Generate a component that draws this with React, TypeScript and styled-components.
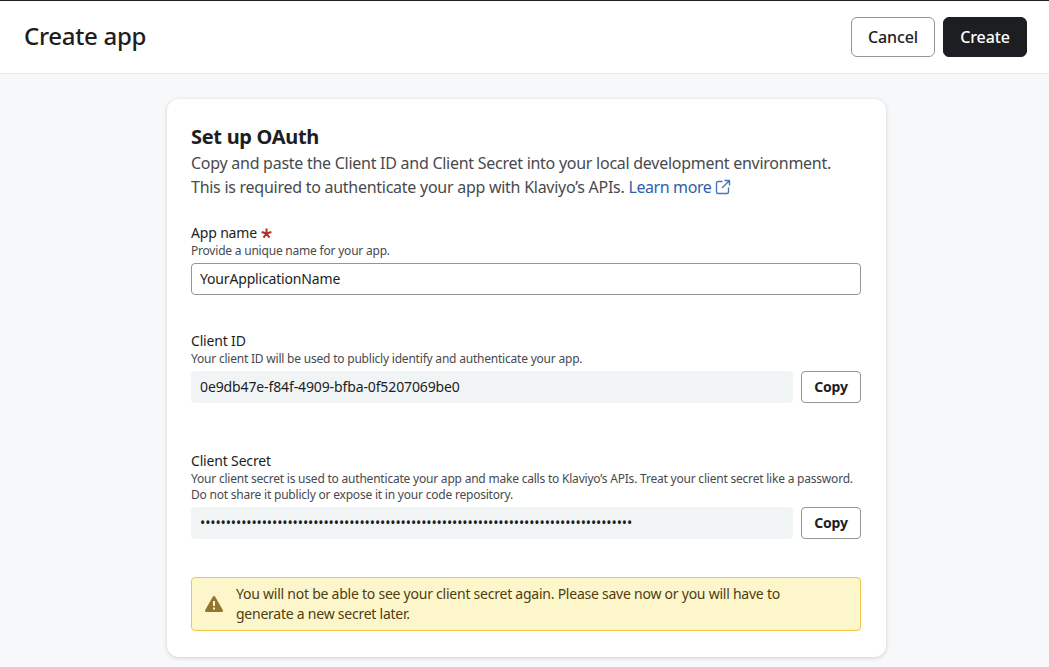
import React from 'react'
import styled, { createGlobalStyle } from 'styled-components'

const GlobalStyle = createGlobalStyle`
    html, body {
        margin: 0;
        padding: 0;
        background: #f7f8fa;
        font-family: "Noto Sans", "Open Sans", sans-serif;
        color: #1c1e21;
    }
`

const Page = styled.div`
    width: 1049px;
    height: 667px;
    overflow: hidden;
    background: #f7f8fa;
`

const Header = styled.header`
    height: 72px;
    box-sizing: content-box;
    background: #fff;
    border-top: 1px solid #1c1e21;
    border-bottom: 1px solid #e8eaec;
    display: flex;
    align-items: center;
    justify-content: space-between;
    padding: 0 22px 0 24px;
`

const Title = styled.h1`
    margin: 0 0 2px;
    font-size: 24px;
    line-height: 30px;
    font-weight: 500;
    letter-spacing: -0.3px;
`

const Actions = styled.div`
    display: flex;
    gap: 8px;
`

const Button = styled.button<{ $primary?: boolean }>`
    width: 84px;
    height: 40px;
    border-radius: 6px;
    box-sizing: border-box;
    font-family: inherit;
    font-size: 16px;
    font-weight: 500;
    letter-spacing: -0.15px;
    padding: 0;
    border: 1px solid ${p => (p.$primary ? '#1c1e21' : '#949596')};
    background: ${p => (p.$primary ? '#1c1e21' : '#fff')};
    color: ${p => (p.$primary ? '#fff' : '#1c1e21')};
`

const Main = styled.main`
    display: flex;
    justify-content: flex-start;
    padding: 25px 0 0 167px;
`

const Card = styled.section`
    width: 719px;
    height: 558px;
    box-sizing: border-box;
    background: #fff;
    border-radius: 12px;
    box-shadow: 0 1px 4px rgba(28, 30, 33, 0.18);
    padding: 26px 25px 0 24px;
`

const CardTitle = styled.h2`
    margin: 0;
    font-size: 20px;
    line-height: 24px;
    font-weight: 700;
    letter-spacing: -0.3px;
`

const Description = styled.p`
    margin: 2px 0 0;
    font-size: 16px;
    line-height: 24px;
    color: #484a4d;
    letter-spacing: -0.265px;
`

const LearnMore = styled.a`
    color: #2e5fa8;
    display: inline-flex;
    align-items: center;
    gap: 4px;
    letter-spacing: -0.4px;
    svg {
        display: block;
    }
`

const Field = styled.div<{ $top: number }>`
    margin-top: ${p => p.$top}px;
`

const Label = styled.div`
    display: flex;
    align-items: center;
    gap: 4px;
    font-size: 14px;
    line-height: 20px;
    color: #1c1e21;
    letter-spacing: -0.17px;
`

const Help = styled.div`
    font-size: 12px;
    line-height: 16px;
    color: #484a4d;
    letter-spacing: -0.21px;
    margin-bottom: 4px;
`

const TextInput = styled.div`
    height: 32px;
    box-sizing: border-box;
    border: 1px solid #949596;
    border-radius: 4px;
    padding: 0 8px;
    font-size: 14px;
    line-height: 30px;
    letter-spacing: -0.17px;
`

const CopyRow = styled.div`
    display: flex;
    gap: 8px;
`

const ReadOnly = styled.div`
    flex: 1;
    height: 32px;
    box-sizing: border-box;
    background: #f1f4f5;
    border-radius: 4px;
    padding: 0 9px;
    font-size: 14px;
    line-height: 31px;
    letter-spacing: -0.12px;
    white-space: nowrap;
    overflow: hidden;
`

const CopyButton = styled.button`
    width: 60px;
    height: 32px;
    box-sizing: border-box;
    background: #fff;
    border: 1px solid #949596;
    border-radius: 4px;
    padding: 0 0 2px;
    font-family: inherit;
    font-size: 14px;
    font-weight: 700;
    letter-spacing: -0.2px;
    color: #1c1e21;
`

const Alert = styled.div`
    margin-top: 38px;
    height: 54px;
    box-sizing: border-box;
    background: #fef6cb;
    border: 1px solid #f0c644;
    border-radius: 4px;
    display: flex;
    align-items: center;
    gap: 13px;
    padding: 0 60px 0 13px;
    font-size: 14px;
    line-height: 20px;
    color: #4e3c12;
    letter-spacing: -0.24px;
    svg {
        flex: none;
    }
`

const Fields = [
    { label: 'Client ID', top: 36, value: '0e9db47e-f84f-4909-bfba-0f5207069be0', help: ['Your client ID will be used to publicly identify and authenticate your app.'] },
    {
        label: 'Client Secret',
        top: 48,
        value: '•'.repeat(84),
        help: [
            'Your client secret is used to authenticate your app and make calls to Klaviyo’s APIs. Treat your client secret like a password.',
            'Do not share it publicly or expose it in your code repository.',
        ],
    },
]

const App: React.FC = () => {
    return (
        <Page>
            <GlobalStyle />
            <Header>
                <Title>Create app</Title>
                <Actions>
                    <Button>Cancel</Button>
                    <Button $primary>Create</Button>
                </Actions>
            </Header>
            <Main>
                <Card>
                    <CardTitle>Set up OAuth</CardTitle>
                    <Description>
                        Copy and paste the Client ID and Client Secret into your local development environment.
                        <br />
                        This is required to authenticate your app with Klaviyo’s APIs.{' '}
                        <LearnMore>
                            Learn more
                            <svg width="16" height="16" viewBox="0 0 16 16" fill="none" stroke="#4a76b5" strokeWidth="1.4" strokeLinecap="round" strokeLinejoin="round">
                                <path d="M7 2.5H3A1.5 1.5 0 0 0 1.500 4v9A1.500 1.500 0 0 0 3 14.500h9a1.500 1.500 0 0 0 1.500-1.500V9" />
                                <path d="M10 1.500h4.500V6M14.500 1.500 7.500 8.500" />
                            </svg>
                        </LearnMore>
                    </Description>
                    <Field $top={24}>
                        <Label>
                            App name
                            <svg width="11" height="11" viewBox="0 0 10 10" stroke="#b3321f" strokeWidth="1.8" strokeLinecap="butt">
                                <path d="M5 5V.4M5 5 .6 3.600M5 5 9.400 3.600M5 5 2.300 8.800M5 5 7.700 8.800" />
                            </svg>
                        </Label>
                        <Help>Provide a unique name for your app.</Help>
                        <TextInput>YourApplicationName</TextInput>
                    </Field>
                    {Fields.map(f => (
                        <Field $top={f.top} key={f.label}>
                            <Label>{f.label}</Label>
                            <Help>
                                {f.help.map(line => (
                                    <div key={line}>{line}</div>
                                ))}
                            </Help>
                            <CopyRow>
                                <ReadOnly>{f.value}</ReadOnly>
                                <CopyButton>Copy</CopyButton>
                            </CopyRow>
                        </Field>
                    ))}
                    <Alert>
                        <svg width="18" height="16" viewBox="0 0 18 16">
                            <path fill="#94752e" fillRule="evenodd" d="M9 0c.5 0 .9.3 1.200.8l7.600 13.300c.5.900-.1 1.900-1.100 1.900H1.300C.3 16-.3 15 .2 14.100L7.800.8C8.100.3 8.500 0 9 0ZM8 5v5h2V5H8Zm0 6.500v2h2v-2H8Z" />
                        </svg>
                        <span>You will not be able to see your client secret again. Please save now or you will have to generate a new secret later.</span>
                    </Alert>
                </Card>
            </Main>
        </Page>
    )
}

export default App
